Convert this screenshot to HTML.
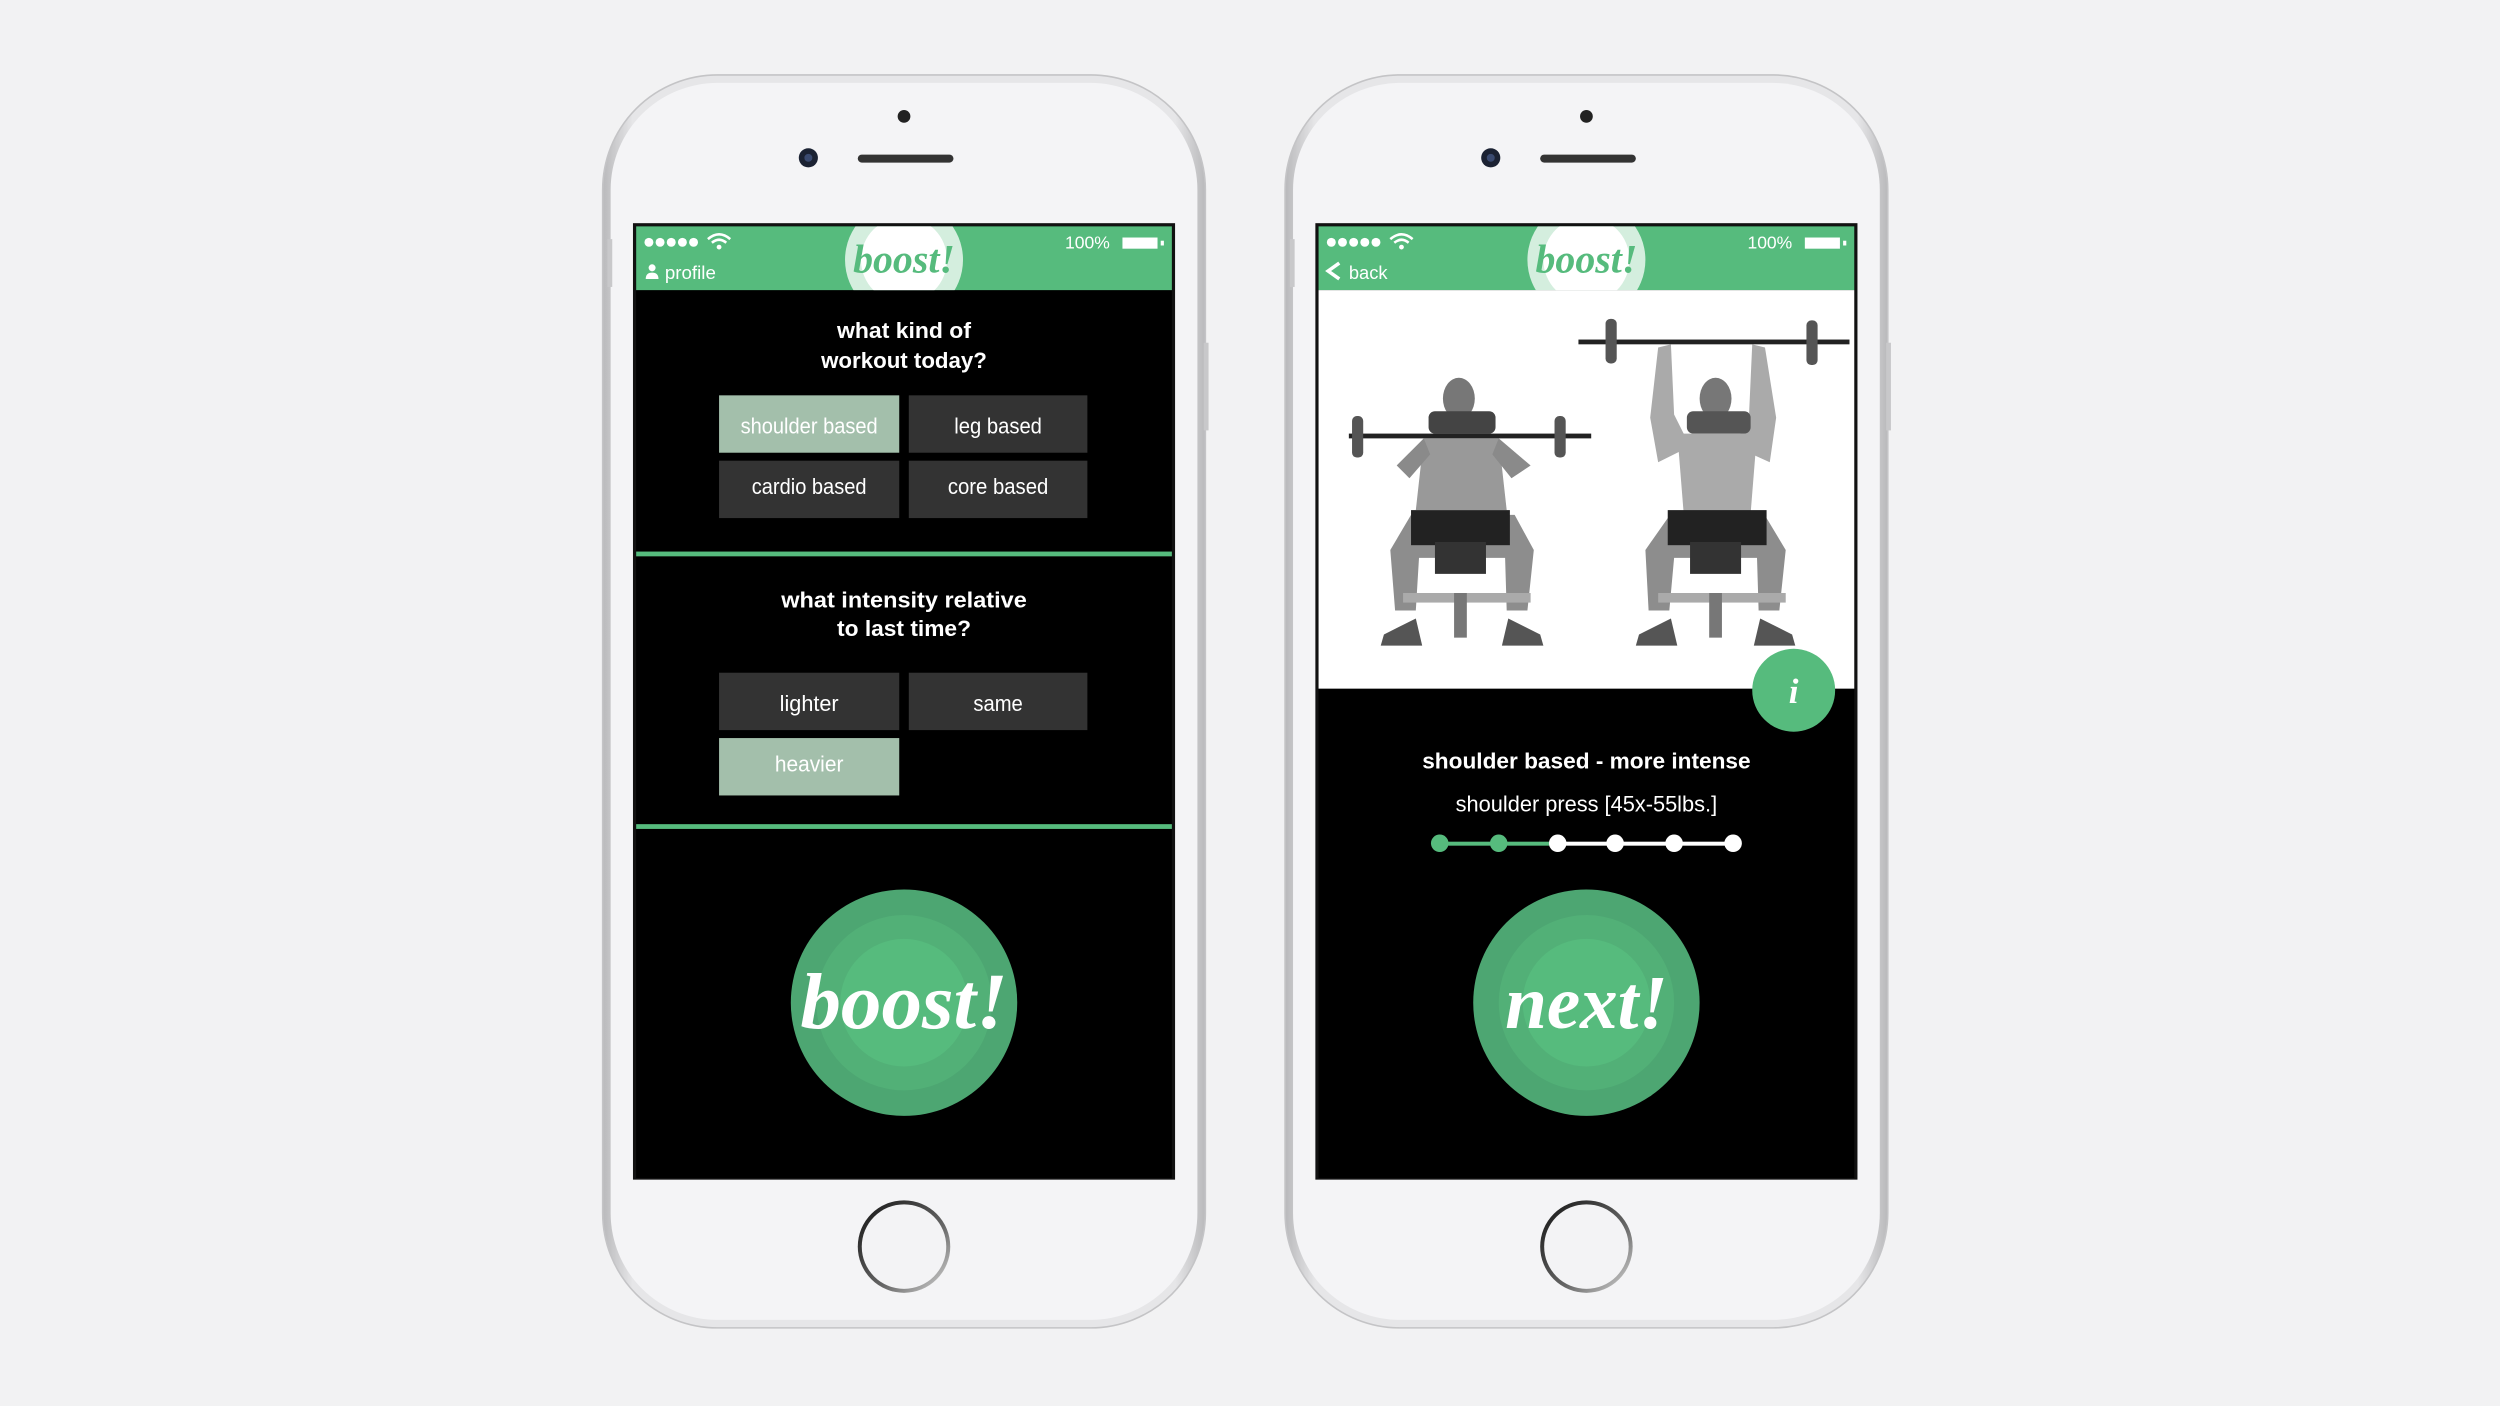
<!DOCTYPE html>
<html><head><meta charset="utf-8">
<style>
html,body{margin:0;padding:0;background:#f2f2f3;}
svg{display:block;}
</style></head>
<body>
<svg width="2500" height="1406" viewBox="0 0 1568 882" preserveAspectRatio="none" xmlns="http://www.w3.org/2000/svg">
<defs>
<linearGradient id="rim" x1="0" y1="0" x2="1" y2="0">
<stop offset="0" stop-color="#b9b9bb"/><stop offset="0.05" stop-color="#e6e6e8"/><stop offset="0.95" stop-color="#e6e6e8"/><stop offset="1" stop-color="#b9b9bb"/>
</linearGradient>
<linearGradient id="hb" x1="0" y1="0" x2="1" y2="1">
<stop offset="0" stop-color="#111"/><stop offset="0.6" stop-color="#666"/><stop offset="1" stop-color="#ddd"/>
</linearGradient>
<g id="phone">
<rect x="378" y="47" width="378" height="786" rx="72" fill="url(#rim)" stroke="#c4c4c6" stroke-width="1"/>
<rect x="383" y="52" width="368" height="776" rx="67" fill="#f4f4f6"/>
<rect x="381" y="150" width="3" height="30" fill="#c8c8ca"/>
<rect x="755" y="215" width="3" height="55" fill="#c8c8ca"/>
<circle cx="567" cy="73" r="4" fill="#222"/>
<circle cx="507" cy="99" r="6" fill="#1b2233"/>
<circle cx="507" cy="99" r="2.5" fill="#3a4a70"/>
<rect x="538" y="97" width="60" height="5" rx="2.5" fill="#333"/>
<rect x="397" y="140" width="340" height="600" fill="#111"/>
<rect x="399" y="142" width="336" height="597" fill="#000"/>
<rect x="399" y="142" width="336" height="40" fill="#56bb7d"/>
<g fill="#fff">
<circle cx="407" cy="152" r="2.8"/><circle cx="414" cy="152" r="2.8"/><circle cx="421" cy="152" r="2.8"/><circle cx="428" cy="152" r="2.8"/><circle cx="435" cy="152" r="2.8"/>
</g>
<path d="M444 150 Q451 144 458 150 M446.5 152.3 Q451 148.5 455.5 152.3" stroke="#fff" stroke-width="1.6" fill="none"/>
<circle cx="451" cy="155" r="1.5" fill="#fff"/>
<text x="668" y="156" font-family="Liberation Sans, sans-serif" font-size="11" fill="#fff">100%</text>
<rect x="704" y="149" width="22" height="7" fill="#fff"/>
<rect x="728" y="151" width="2" height="3" fill="#fff"/>
<clipPath id="hc"><rect x="399" y="142" width="336" height="40"/></clipPath>
<g clip-path="url(#hc)">
<circle cx="567" cy="163" r="37" fill="#ffffff" opacity="0.75"/>
<circle cx="567" cy="163" r="27" fill="#ffffff"/>
</g>
<text x="567" y="171" text-anchor="middle" font-family="Liberation Serif, serif" font-style="italic" font-weight="bold" font-size="25" fill="#56bb7d">boost!</text>
<circle cx="567" cy="629" r="71" fill="#4da672"/>
<circle cx="567" cy="629" r="55" fill="#52b077"/>
<circle cx="567" cy="629" r="40" fill="#56bb7d"/>
<circle cx="567" cy="782" r="29" fill="url(#hb)"/>
<circle cx="567" cy="782" r="26.5" fill="#f3f3f5"/>
</g>
</defs>

<!-- Phone 1 -->
<use href="#phone"/>
<g font-family="Liberation Sans, sans-serif" fill="#fff">
<circle cx="409" cy="168" r="2.2" fill="#fff"/>
<path d="M405 175 Q405 171 409 171 Q413 171 413 175 Z" fill="#fff"/>
<text x="417" y="175" font-size="11.5" textLength="32" lengthAdjust="spacingAndGlyphs">profile</text>
<text x="567" y="212" text-anchor="middle" font-size="14" font-weight="bold" textLength="84" lengthAdjust="spacingAndGlyphs">what kind of</text>
<text x="567" y="231" text-anchor="middle" font-size="14" font-weight="bold" textLength="104" lengthAdjust="spacingAndGlyphs">workout today?</text>
<rect x="451" y="248" width="113" height="36" fill="#a3bfab"/>
<rect x="570" y="248" width="112" height="36" fill="#333"/>
<rect x="451" y="289" width="113" height="36" fill="#333"/>
<rect x="570" y="289" width="112" height="36" fill="#333"/>
<text x="507.5" y="272" text-anchor="middle" font-size="14" textLength="86" lengthAdjust="spacingAndGlyphs">shoulder based</text>
<text x="626" y="272" text-anchor="middle" font-size="14" textLength="55" lengthAdjust="spacingAndGlyphs">leg based</text>
<text x="507.5" y="310" text-anchor="middle" font-size="14" textLength="72" lengthAdjust="spacingAndGlyphs">cardio based</text>
<text x="626" y="310" text-anchor="middle" font-size="14" textLength="63" lengthAdjust="spacingAndGlyphs">core based</text>
<rect x="399" y="346" width="336" height="3" fill="#56bb7d"/>
<text x="567" y="381" text-anchor="middle" font-size="14" font-weight="bold" textLength="154" lengthAdjust="spacingAndGlyphs">what intensity relative</text>
<text x="567" y="399" text-anchor="middle" font-size="14" font-weight="bold" textLength="84" lengthAdjust="spacingAndGlyphs">to last time?</text>
<rect x="451" y="422" width="113" height="36" fill="#333"/>
<rect x="570" y="422" width="112" height="36" fill="#333"/>
<rect x="451" y="463" width="113" height="36" fill="#a3bfab"/>
<text x="507.5" y="446" text-anchor="middle" font-size="14" textLength="37" lengthAdjust="spacingAndGlyphs">lighter</text>
<text x="626" y="446" text-anchor="middle" font-size="14" textLength="31" lengthAdjust="spacingAndGlyphs">same</text>
<text x="507.5" y="484" text-anchor="middle" font-size="14" textLength="43" lengthAdjust="spacingAndGlyphs">heavier</text>
<rect x="399" y="517" width="336" height="3" fill="#56bb7d"/>
<text x="567" y="645" text-anchor="middle" font-family="Liberation Serif, serif" font-style="italic" font-weight="bold" font-size="50" textLength="130" lengthAdjust="spacingAndGlyphs">boost!</text>
</g>

<!-- Phone 2 -->
<g transform="translate(428,0)"><use href="#phone"/></g>
<g font-family="Liberation Sans, sans-serif" fill="#fff">
<path d="M840 165 L833 170 L840 175" stroke="#fff" stroke-width="2.2" fill="none"/>
<text x="846" y="175" font-size="11.5">back</text>
<rect x="827" y="182" width="336" height="250" fill="#fff"/>
<!-- left figure -->
<g fill="#8a8a8a">
<rect x="846" y="272" width="152" height="3" fill="#222"/>
<rect x="848" y="261" width="7" height="26" rx="3" fill="#555"/>
<rect x="975" y="261" width="7" height="26" rx="3" fill="#555"/>
<ellipse cx="915" cy="250" rx="10" ry="13" fill="#777"/>
<rect x="896" y="258" width="42" height="14" rx="4" fill="#444"/>
<path d="M893 275 L940 275 L945 320 L888 320 Z" fill="#999"/>
<path d="M876 292 L893 275 L897 285 L884 300 Z"/>
<path d="M960 292 L940 275 L936 285 L948 300 Z"/>
<path d="M885 323 L950 323 L962 345 L958 383 L945 383 L944 350 L890 350 L888 383 L875 383 L872 345 Z" fill="#8d8d8d"/>
<rect x="885" y="320" width="62" height="22" fill="#222"/>
<rect x="900" y="340" width="32" height="20" fill="#333"/>
<rect x="880" y="372" width="80" height="6" fill="#aaa"/>
<rect x="912" y="372" width="8" height="28" fill="#777"/>
<path d="M868 398 L888 388 L892 405 L866 405 Z" fill="#555"/>
<path d="M946 388 L966 398 L968 405 L942 405 Z" fill="#555"/>
</g>
<!-- right figure -->
<g fill="#8a8a8a">
<rect x="990" y="213" width="170" height="3" fill="#222"/>
<rect x="1007" y="200" width="7" height="28" rx="3" fill="#555"/>
<rect x="1133" y="201" width="7" height="28" rx="3" fill="#555"/>
<path d="M1040 218 L1048 216 L1050 260 L1060 280 L1040 290 L1035 262 Z" fill="#aaa"/>
<path d="M1107 218 L1099 216 L1097 260 L1088 280 L1110 290 L1114 262 Z" fill="#aaa"/>
<ellipse cx="1076" cy="250" rx="10" ry="13" fill="#777"/>
<rect x="1058" y="258" width="40" height="14" rx="4" fill="#555"/>
<path d="M1052 272 L1102 272 L1098 322 L1056 322 Z" fill="#aaa"/>
<path d="M1046 325 L1108 325 L1120 345 L1116 383 L1103 383 L1102 350 L1050 350 L1047 383 L1034 383 L1032 345 Z" fill="#8d8d8d"/>
<rect x="1046" y="320" width="62" height="22" fill="#222"/>
<rect x="1060" y="340" width="32" height="20" fill="#333"/>
<rect x="1040" y="372" width="80" height="6" fill="#aaa"/>
<rect x="1072" y="372" width="8" height="28" fill="#777"/>
<path d="M1028 398 L1048 388 L1052 405 L1026 405 Z" fill="#555"/>
<path d="M1104 388 L1124 398 L1126 405 L1100 405 Z" fill="#555"/>
</g>
<circle cx="1125" cy="433" r="26" fill="#56bb7d"/>
<text x="1125" y="441" text-anchor="middle" font-family="Liberation Serif, serif" font-style="italic" font-weight="bold" font-size="22">i</text>
<text x="995" y="482" text-anchor="middle" font-size="14" font-weight="bold" textLength="206" lengthAdjust="spacingAndGlyphs">shoulder based - more intense</text>
<text x="995" y="509" text-anchor="middle" font-size="14" textLength="164" lengthAdjust="spacingAndGlyphs">shoulder press [45x-55lbs.]</text>
<rect x="903" y="528" width="74" height="2.5" fill="#56bb7d"/>
<rect x="977" y="528" width="110" height="2.5" fill="#fff"/>
<circle cx="903" cy="529" r="5.5" fill="#56bb7d"/>
<circle cx="940" cy="529" r="5.5" fill="#56bb7d"/>
<circle cx="977" cy="529" r="5.5" fill="#fff"/>
<circle cx="1013" cy="529" r="5.5" fill="#fff"/>
<circle cx="1050" cy="529" r="5.5" fill="#fff"/>
<circle cx="1087" cy="529" r="5.5" fill="#fff"/>
<text x="995" y="645" text-anchor="middle" font-family="Liberation Serif, serif" font-style="italic" font-weight="bold" font-size="48" textLength="102" lengthAdjust="spacingAndGlyphs">next!</text>
</g>
</svg>
</body></html>
